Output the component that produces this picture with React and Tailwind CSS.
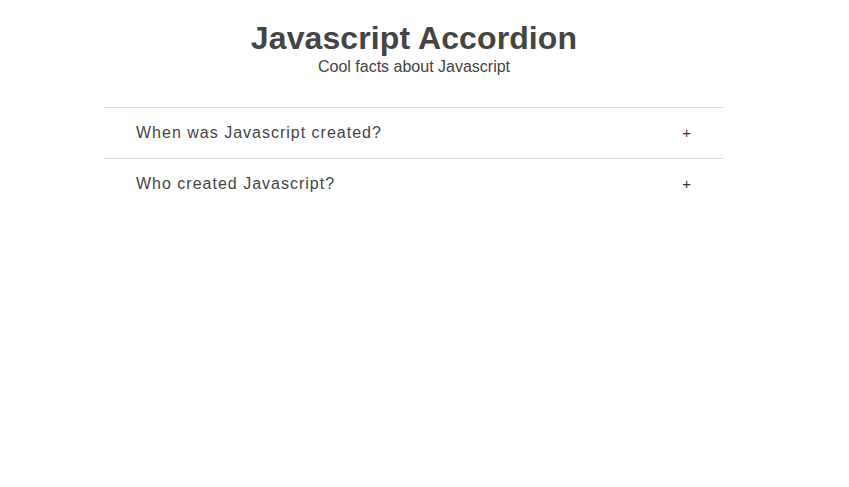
export default function App() {
  const items = ['When was Javascript created?', 'Who created Javascript?']
  return (
    <div className="w-[828px] min-h-[487px] bg-white text-[#444] font-['Liberation_Sans',Arial,sans-serif]">
      <div className="text-center pt-[18px]">
        <h1 className="text-[32px] font-bold leading-[40px] tracking-[0.1px]">Javascript Accordion</h1>
        <p className="text-[16px] leading-[18px]">Cool facts about Javascript</p>
      </div>
      <div className="w-[620px] mx-auto mt-[31px]">
        {items.map(q => (
          <div key={q} className="border-t border-[#e0e0e0] h-[51px] flex items-center justify-between pl-[32px] pr-[33px]">
            <span className="text-[16px] tracking-[1px]">{q}</span>
            <span className="text-[15px] text-[#333]">+</span>
          </div>
        ))}
      </div>
    </div>
  )
}
